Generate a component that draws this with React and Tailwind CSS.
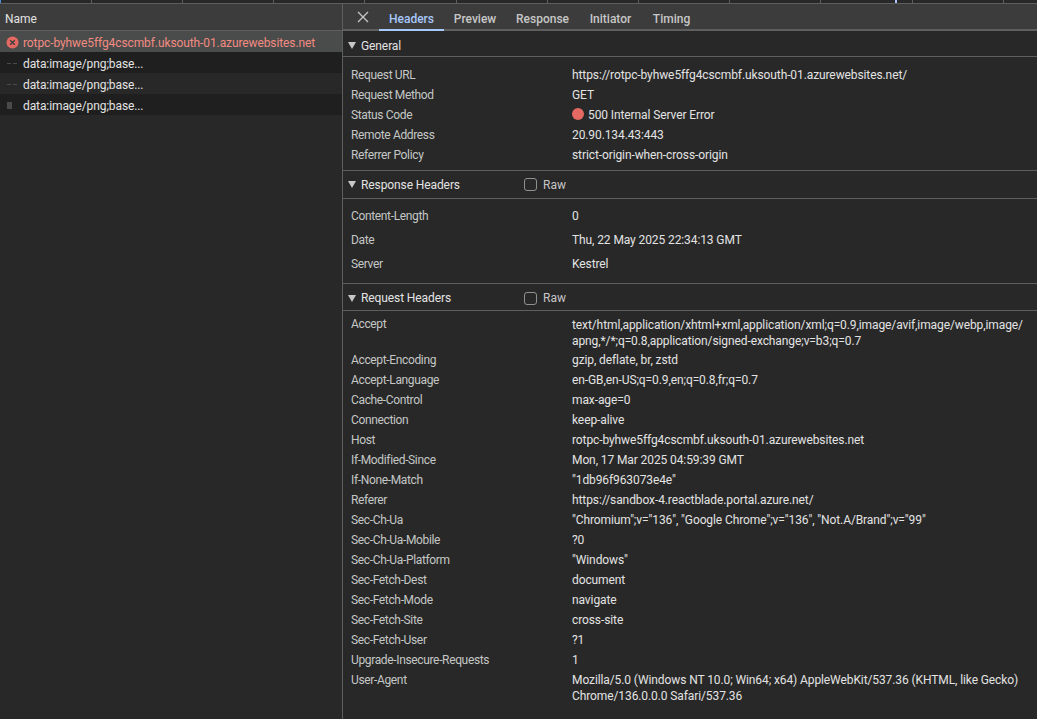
const ticks = [91, 182, 273, 364, 456, 547, 638, 729, 820, 912, 1003];

const general = [
  ["Request URL", "https://rotpc-byhwe5ffg4cscmbf.uksouth-01.azurewebsites.net/"],
  ["Request Method", "GET"],
  ["Status Code", "500 Internal Server Error", true],
  ["Remote Address", "20.90.134.43:443"],
  ["Referrer Policy", "strict-origin-when-cross-origin"],
];

const responseHeaders = [
  ["Content-Length", "0"],
  ["Date", "Thu, 22 May 2025 22:34:13 GMT"],
  ["Server", "Kestrel"],
];

const requestHeaders = [
  ["Accept-Encoding", "gzip, deflate, br, zstd"],
  ["Accept-Language", "en-GB,en-US;q=0.9,en;q=0.8,fr;q=0.7"],
  ["Cache-Control", "max-age=0"],
  ["Connection", "keep-alive"],
  ["Host", "rotpc-byhwe5ffg4cscmbf.uksouth-01.azurewebsites.net"],
  ["If-Modified-Since", "Mon, 17 Mar 2025 04:59:39 GMT"],
  ["If-None-Match", '"1db96f963073e4e"'],
  ["Referer", "https://sandbox-4.reactblade.portal.azure.net/"],
  ["Sec-Ch-Ua", '"Chromium";v="136", "Google Chrome";v="136", "Not.A/Brand";v="99"'],
  ["Sec-Ch-Ua-Mobile", "?0"],
  ["Sec-Ch-Ua-Platform", '"Windows"'],
  ["Sec-Fetch-Dest", "document"],
  ["Sec-Fetch-Mode", "navigate"],
  ["Sec-Fetch-Site", "cross-site"],
  ["Sec-Fetch-User", "?1"],
  ["Upgrade-Insecure-Requests", "1"],
];

function Row({ name, value, status, height = "h-5" }) {
  return (
    <div className={`flex items-center pt-1 ${height}`}>
      <div className="w-[229px] pl-2 text-xs tracking-[-0.35px] text-[#c4c7c5] shrink-0">{name}</div>
      <div className="flex items-center text-xs tracking-[-0.1px] text-[#e3e3e3] whitespace-nowrap">
        {status && <span className="w-3 h-3 -mt-0.5 rounded-full bg-[#e46962] mr-1"></span>}
        {value}
      </div>
    </div>
  );
}

function SectionHead({ title, raw, className }) {
  return (
    <div className={`flex items-center border-b border-[#5e5e5e] ${className}`}>
      <svg width="8" height="7" viewBox="0 0 8 7" className="ml-[5px] mr-[5px] shrink-0">
        <path d="M0 0 H8 L4 7 Z" fill="#c7c7c7" />
      </svg>
      <span className="w-[163px] text-xs tracking-[-0.1px] text-[#e3e3e3]">{title}</span>
      {raw && (
        <div className="flex items-center">
          <span className="w-[13px] h-[13px] rounded-[3px] border border-[#8e918f] mr-[6px]"></span>
          <span className="text-xs text-[#c7c7c7]">Raw</span>
        </div>
      )}
    </div>
  );
}

function Dashes() {
  return (
    <span className="flex gap-0.5 w-[10px] ml-[7px] mr-[6px] shrink-0">
      <span className="w-1 h-px bg-[#4a4a4a]"></span>
      <span className="w-1 h-px bg-[#4a4a4a]"></span>
    </span>
  );
}

export default function App() {
  return (
    <div className="relative w-[1037px] h-[719px] overflow-hidden bg-[#282828] [font-family:Roboto,sans-serif]">
      {/* overview strip */}
      <div className="relative h-1 border-b border-[#5e5e5e] bg-[#282828]">
        <div className="absolute left-0 top-0 w-px h-[3px] bg-[#4a90d9]"></div>
        {ticks.map((x) => (
          <div key={x} className="absolute top-0 w-px h-[3px] bg-[#5e5e5e]" style={{ left: x }}></div>
        ))}
        <div className="absolute left-[895px] top-0 w-0.5 h-[3px] bg-[#a8c7fa]"></div>
      </div>

      <div className="flex h-[715px]">
        {/* request list */}
        <div className="w-[342px] shrink-0 bg-[#282828]">
          <div className="flex items-center h-[27px] pl-[5px] pt-1 bg-[#3c3c3c] border-b border-[#5e5e5e] text-xs text-[#e3e3e3]">
            Name
          </div>
          <div className="flex items-center h-[21px] pt-0.5 bg-[#4a4c4b] text-xs tracking-[-0.1px] text-[#f28b82]">
            <svg width="13" height="13" viewBox="0 0 14 14" className="ml-[6px] mr-[4px] shrink-0">
              <circle cx="7" cy="7" r="6.5" fill="#e46962" />
              <path d="M4.5 4.5 L9.5 9.5 M9.5 4.5 L4.5 9.5" stroke="#3c3c3c" strokeWidth="1.4" />
            </svg>
            rotpc-byhwe5ffg4cscmbf.uksouth-01.azurewebsites.net
          </div>
          <div className="flex items-center h-[21px] pt-0.5 bg-[#1f1f1f] text-xs tracking-[-0.1px] text-[#e3e3e3]">
            <Dashes />
            data:image/png;base...
          </div>
          <div className="flex items-center h-[21px] pt-0.5 bg-[#282828] text-xs tracking-[-0.1px] text-[#e3e3e3]">
            <Dashes />
            data:image/png;base...
          </div>
          <div className="flex items-center h-[21px] pt-0.5 bg-[#1f1f1f] text-xs tracking-[-0.1px] text-[#e3e3e3]">
            <span className="w-[5px] h-[7px] ml-[7px] mr-[11px] bg-[#4a4a4a] shrink-0"></span>
            data:image/png;base...
          </div>
        </div>

        {/* details */}
        <div className="flex-1 border-l border-[#5e5e5e]">
          <div className="flex items-end h-[27px] bg-[#3c3c3c] border-b-2 border-[#5e5e5e]">
            <svg width="12" height="12" viewBox="0 0 12 12" className="ml-[14px] mr-[10px] mb-[6px]">
              <path d="M1 1 L11 11 M11 1 L1 11" stroke="#c7c7c7" strokeWidth="1.3" />
            </svg>
            <div className="relative h-full w-[65px] pt-1 flex items-center justify-center text-xs font-medium text-[#a8c7fa]">
              Headers
              <div className="absolute left-0 right-0 bottom-[-2px] h-0.5 bg-[#a8c7fa]"></div>
            </div>
            <div className="h-full w-[62px] pt-1 flex items-center justify-center text-xs font-medium text-[#c7c7c7]">Preview</div>
            <div className="h-full w-[73px] pt-1 flex items-center justify-center text-xs font-medium text-[#c7c7c7]">Response</div>
            <div className="h-full w-[63px] pt-1 flex items-center justify-center text-xs font-medium text-[#c7c7c7]">Initiator</div>
            <div className="h-full w-[59px] pt-1 flex items-center justify-center text-xs font-medium text-[#c7c7c7]">Timing</div>
          </div>

          <SectionHead title="General" className="h-[26px] pt-1" />
          <div className="pt-[6px] pb-[7px] border-b border-[#5e5e5e]">
            {general.map(([n, v, s]) => (
              <Row key={n} name={n} value={v} status={s} />
            ))}
          </div>

          <SectionHead title="Response Headers" raw className="h-7" />
          <div className="pt-[3px] pb-[9px] border-b border-[#5e5e5e]">
            {responseHeaders.map(([n, v]) => (
              <Row key={n} name={n} value={v} height="h-6" />
            ))}
          </div>

          <SectionHead title="Request Headers" raw className="h-[27px] pt-0.5" />
          <div>
            <div className="flex h-[37px]">
              <div className="w-[229px] pl-2 pt-[3px] text-xs tracking-[-0.35px] leading-5 text-[#c4c7c5] shrink-0">Accept</div>
              <div className="pt-[6px] text-xs tracking-[-0.1px] leading-4 text-[#e3e3e3] whitespace-nowrap">
                text/html,application/xhtml+xml,application/xml;q=0.9,image/avif,image/webp,image/
                <br />
                apng,*/*;q=0.8,application/signed-exchange;v=b3;q=0.7
              </div>
            </div>
            {requestHeaders.map(([n, v]) => (
              <Row key={n} name={n} value={v} />
            ))}
            <div className="flex">
              <div className="w-[229px] pl-2 pt-0.5 text-xs tracking-[-0.35px] leading-5 text-[#c4c7c5] shrink-0">User-Agent</div>
              <div className="pt-1 text-xs tracking-[-0.1px] leading-4 text-[#e3e3e3] whitespace-nowrap">
                Mozilla/5.0 (Windows NT 10.0; Win64; x64) AppleWebKit/537.36 (KHTML, like Gecko)
                <br />
                Chrome/136.0.0.0 Safari/537.36
              </div>
            </div>
          </div>
        </div>
      </div>
    </div>
  );
}
